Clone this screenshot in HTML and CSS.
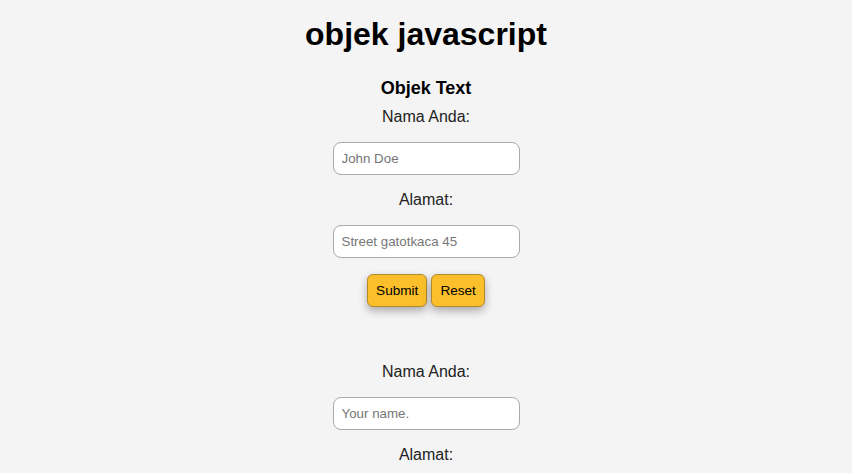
FILE: index.html
```html
<!DOCTYPE html>
<html lang="id">
<head>
<meta charset="utf-8">
<title>objek javascript</title>
<link rel="stylesheet" href="styles.css">
</head>
<body>
<h1 class="title">objek javascript</h1>
<section class="form-block">
  <h2 class="subtitle">Objek Text</h2>
  <label class="field-label" for="nama1">Nama Anda:</label>
  <input class="field-input" id="nama1" type="text" placeholder="John Doe">
  <label class="field-label" for="alamat1">Alamat:</label>
  <input class="field-input" id="alamat1" type="text" placeholder="Street gatotkaca 45">
  <div class="actions">
    <button class="btn" type="button">Submit</button>
    <button class="btn" type="button">Reset</button>
  </div>
</section>
<section class="form-block second">
  <label class="field-label" for="nama2">Nama Anda:</label>
  <input class="field-input" id="nama2" type="text" placeholder="Your name.">
  <label class="field-label" for="alamat2">Alamat:</label>
  <input class="field-input" id="alamat2" type="text" placeholder="Your address.">
</section>
</body>
</html>
```
FILE: styles.css
```css
html, body {
  margin: 0;
  padding: 0;
  background: #f4f4f4;
}
body {
  font-family: "Liberation Sans", Arial, sans-serif;
  color: #222;
  padding-top: 16px;
  display: flex;
  flex-direction: column;
  align-items: center;
}
.title {
  margin: 0;
  font-size: 32px;
  font-weight: bold;
  color: #000;
  line-height: 37px;
}
.form-block {
  display: flex;
  flex-direction: column;
  align-items: center;
  gap: 16px;
}
.subtitle {
  margin: 25px 0 -7px;
  font-size: 18px;
  font-weight: bold;
  color: #000;
  line-height: 21px;
}
.second {
  margin-top: 56px;
}
.field-label {
  font-size: 16px;
  line-height: 18px;
  color: #222;
}
.field-input {
  box-sizing: border-box;
  width: 187px;
  height: 33px;
  border: 1px solid #aaa;
  border-radius: 8px;
  background: #fff;
  padding: 0 8px;
  font-family: "Liberation Sans", Arial, sans-serif;
  font-size: 13.33px;
  color: #222;
  outline: none;
}
.field-input::placeholder {
  color: #767676;
}
.actions {
  display: flex;
  gap: 4px;
}
.btn {
  box-sizing: border-box;
  height: 33px;
  padding: 0 8px;
  font-family: "Liberation Sans", Arial, sans-serif;
  font-size: 13.6px;
  color: #000;
  background: #fbbf2b;
  border: 1px solid #b08a2c;
  border-radius: 6px;
  box-shadow: 0 4px 8px rgba(0, 0, 0, 0.3);
  cursor: pointer;
}
```
